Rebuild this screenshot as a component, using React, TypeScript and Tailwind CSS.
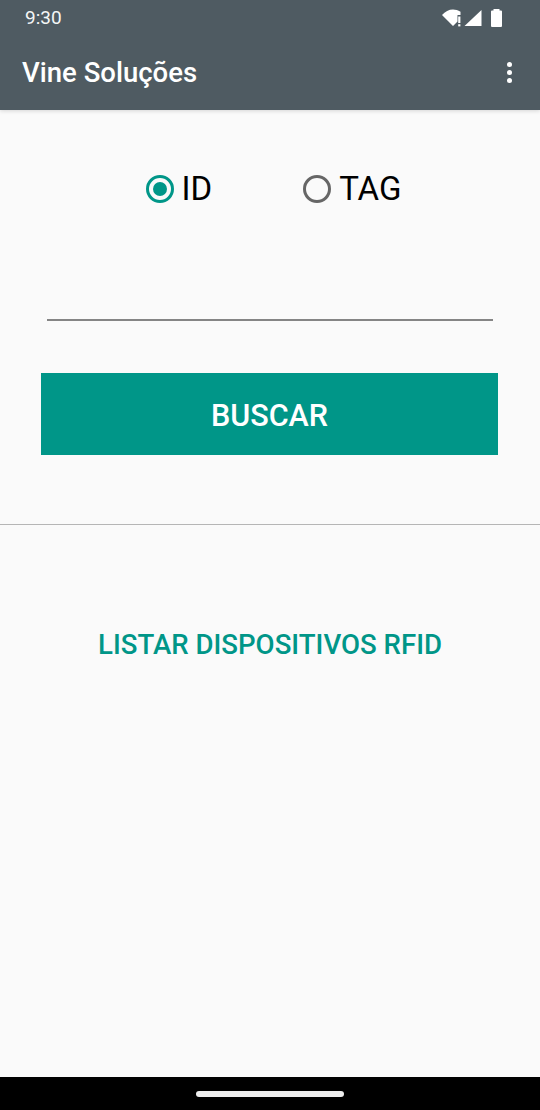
import React from 'react';

function StatusIcons() {
  return (
    <svg width="61" height="20" viewBox="0 0 61 20" className="mt-[1px]">
      {/* wifi with no-internet mark */}
      <path d="M0 7C3 3.5 7 1.5 11 1.5C13.5 1.5 16 2.2 18.500 3.8V7H15.5V13.5L11 18Z" fill="#fff" />
      <rect x="16.2" y="8.500" width="2.200" height="6.500" fill="#fff" />
      <rect x="16.2" y="16.200" width="2.200" height="2.200" fill="#fff" />
      {/* signal */}
      <path d="M39.500 2V18H22.500Z" fill="#fff" />
      {/* battery */}
      <path d="M51.500 2.500V1H57.500V2.500H59a1 1 0 0 1 1 1V18a1 1 0 0 1-1 1H50a1 1 0 0 1-1-1V3.500a1 1 0 0 1 1-1Z" fill="#fff" />
    </svg>
  );
}

function Radio({ label, checked }: { label: string; checked?: boolean }) {
  return (
    <div className="flex items-center">
      <div className={`w-[28px] h-[28px] rounded-full border-[3px] flex items-center justify-center ${checked ? 'border-[#009688]' : 'border-[#666666]'}`}>
        {checked && <div className="w-[14px] h-[14px] rounded-full bg-[#009688]"></div>}
      </div>
      <span className="ml-[8px] pt-[1px] text-[33px] leading-[36px] text-black">{label}</span>
    </div>
  );
}

export default function App() {
  return (
    <div className="w-[540px] h-[1110px] flex flex-col bg-[#fafafa] overflow-hidden font-['Roboto',sans-serif]">
      {/* Toolbar + status bar */}
      <header className="h-[110px] bg-[#4f5b62] shadow-[0_1px_4px_rgba(0,0,0,0.15)] text-white shrink-0">
        <div className="h-[35px] flex items-center justify-between pl-[25px] pr-[37px]">
          <span className="text-[19px] leading-[20px] text-[#f4f6f6]">9:30</span>
          <StatusIcons />
        </div>
        <div className="h-[75px] flex items-center justify-between pl-[22px] pr-[28px]">
          <h1 className="text-[27.500px] leading-[32px] font-medium">Vine Soluções</h1>
          <div className="flex flex-col gap-[3px]">
            <div className="w-[5px] h-[5px] rounded-full bg-white"></div>
            <div className="w-[5px] h-[5px] rounded-full bg-white"></div>
            <div className="w-[5px] h-[5px] rounded-full bg-white"></div>
          </div>
        </div>
      </header>

      <main className="flex-1 flex flex-col">
        <div className="flex justify-center gap-[91px] pt-[60px] pl-[7px]">
          <Radio label="ID" checked />
          <Radio label="TAG" />
        </div>

        <div className="mx-[47px] mt-[112px] h-[1.500px] bg-[#858585]"></div>

        <button className="ml-[41px] mr-[42px] mt-[52px] h-[82px] pt-[4px] bg-[#009688] text-white text-[30.500px] font-medium flex items-center justify-center">
          BUSCAR
        </button>

        <div className="mt-[69px] h-[1.500px] bg-[#b5b5b5]"></div>

        <button className="mt-[102px] text-[#009688] text-[27.600px] leading-[36px] font-medium text-center">
          LISTAR DISPOSITIVOS RFID
        </button>
      </main>

      {/* Navigation bar */}
      <div className="h-[33px] bg-black shrink-0 flex items-center justify-center">
        <div className="w-[148px] h-[6px] rounded-full bg-[#eeeeee]"></div>
      </div>
    </div>
  );
}
